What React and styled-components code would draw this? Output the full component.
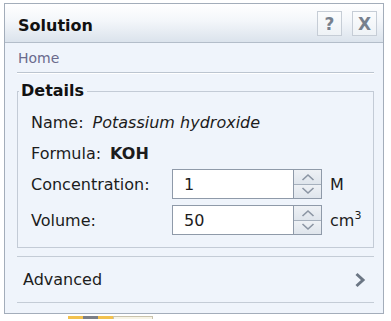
import React from 'react';
import styled, { createGlobalStyle } from 'styled-components';

const GlobalStyle = createGlobalStyle`
    body {
        margin: 0;
        background: #ffffff;
        font-family: 'DejaVu Sans', 'Noto Sans', sans-serif;
    }
`;

const Spinner = () => (
    <SpinBox>
        <SpinHalf>
            <svg width="14" height="8" viewBox="0 0 14 8">
                <path d="M1.5 7 L7 2 L12.5 7" fill="none" stroke="#8b95a3" strokeWidth="1.6" />
            </svg>
        </SpinHalf>
        <SpinHalf $bottom>
            <svg width="14" height="8" viewBox="0 0 14 8">
                <path d="M1.5 1 L7 6 L12.5 1" fill="none" stroke="#8b95a3" strokeWidth="1.6" />
            </svg>
        </SpinHalf>
    </SpinBox>
);

const App = () => {
    return (
        <Page>
            <GlobalStyle />
            <Panel>
                <Header>
                    <Title>Solution</Title>
                    <HeaderButtons>
                        <IconButton>?</IconButton>
                        <IconButton>X</IconButton>
                    </HeaderButtons>
                </Header>
                <Body>
                    <Breadcrumb>Home</Breadcrumb>
                    <Group>
                        <Legend>Details</Legend>
                        <Row>
                            <Label>Name:</Label>
                            <Italic>Potassium hydroxide</Italic>
                        </Row>
                        <Row>
                            <Label>Formula:</Label>
                            <Strong>KOH</Strong>
                        </Row>
                        <FieldRow>
                            <FieldLabel>Concentration:</FieldLabel>
                            <InputWrap>
                                <Input defaultValue="1" />
                                <Spinner />
                            </InputWrap>
                            <Unit>M</Unit>
                        </FieldRow>
                        <FieldRow>
                            <FieldLabel>Volume:</FieldLabel>
                            <InputWrap>
                                <Input defaultValue="50" />
                                <Spinner />
                            </InputWrap>
                            <Unit>cm<sup>3</sup></Unit>
                        </FieldRow>
                    </Group>
                    <Expander>
                        <span>Advanced</span>
                        <svg width="12" height="16" viewBox="0 0 12 16">
                            <path d="M2.5 2 L9 8 L2.5 14" fill="none" stroke="#6b7684" strokeWidth="3" />
                        </svg>
                    </Expander>
                </Body>
            </Panel>
            <Dock>
                <DockTab />
                <DockSlot />
            </Dock>
        </Page>
    );
}

const Page = styled.div`
    padding: 3px 0 0 4px;
    height: 318px;
    overflow: hidden;
`;

const Panel = styled.div`
    box-sizing: border-box;
    width: 380px;
    height: 311px;
    border: 1px solid #a3adba;
    background: #eff4fb;
    display: flex;
    flex-direction: column;
`;

const Header = styled.div`
    box-sizing: border-box;
    height: 39px;
    padding: 0 6px 0 13px;
    display: flex;
    align-items: center;
    justify-content: space-between;
    background: linear-gradient(#ffffff 0%, #f3f6fa 45%, #dbe3ec 100%);
    border-bottom: 1px solid #b3bdc9;
`;

const Title = styled.div`
    font-size: 16px;
    font-weight: bold;
    color: #111111;
    padding-top: 4px;
`;

const HeaderButtons = styled.div`
    display: flex;
    gap: 10px;
    padding-top: 1px;
`;

const IconButton = styled.div`
    box-sizing: border-box;
    width: 25px;
    height: 25px;
    border: 1px solid #c6cdd6;
    background: linear-gradient(#fbfcfd, #eef2f6);
    color: #76808d;
    font-size: 17px;
    font-weight: bold;
    display: flex;
    align-items: center;
    justify-content: center;
`;

const Body = styled.div`
    padding: 0 9px 0 12px;
    display: flex;
    flex-direction: column;
`;

const Breadcrumb = styled.div`
    height: 29px;
    padding-left: 1px;
    font-size: 14px;
    color: #6a6a8c;
    display: flex;
    align-items: center;
    border-bottom: 1px solid #bcc5d0;
    box-shadow: 0 1px 0 #ffffff;
`;

const Group = styled.fieldset`
    margin: 8px 0 0 0;
    padding: 6px 12px 12px 13px;
    border: 1px solid #c3cbd6;
    display: flex;
    flex-direction: column;
    gap: 1px;
`;

const Legend = styled.legend`
    padding: 0 3px 0 2px;
    margin-left: -12px;
    font-size: 16px;
    line-height: 20px;
    font-weight: bold;
    color: #111111;
`;

const Row = styled.div`
    height: 30px;
    display: flex;
    align-items: center;
    gap: 9px;
    font-size: 16px;
    color: #1c1c1c;
`;

const Label = styled.span``;

const Italic = styled.span`
    font-style: italic;
`;

const Strong = styled.span`
    font-weight: bold;
`;

const FieldRow = styled.div`
    height: 30px;
    display: flex;
    align-items: center;
    font-size: 16px;
    color: #1c1c1c;
    & + & {
        margin-top: 5px;
    }
`;

const FieldLabel = styled.span`
    width: 141px;
`;

const InputWrap = styled.div`
    display: flex;
    height: 30px;
`;

const Input = styled.input`
    box-sizing: border-box;
    width: 121px;
    height: 30px;
    margin: 0;
    padding: 0 0 0 11px;
    border: 1px solid #8f9aa9;
    border-right: none;
    background: #ffffff;
    font-family: 'DejaVu Sans', sans-serif;
    font-size: 16px;
    color: #1c1c1c;
    outline: none;
`;

const SpinBox = styled.div`
    box-sizing: border-box;
    width: 29px;
    height: 30px;
    border: 1px solid #8f9aa9;
    display: flex;
    flex-direction: column;
`;

const SpinHalf = styled.div`
    flex: 1;
    display: flex;
    align-items: center;
    justify-content: center;
    background: linear-gradient(#eef1f5, #dfe5ec);
    border-top: ${({ $bottom }) => ($bottom ? '1px solid #a6b0bd' : 'none')};
`;

const Unit = styled.span`
    margin-left: 8px;
    sup {
        font-size: 11px;
        vertical-align: 7px;
        line-height: 0;
    }
`;

const Expander = styled.div`
    margin-top: 8px;
    height: 45px;
    padding: 0 8px 0 6px;
    display: flex;
    align-items: center;
    justify-content: space-between;
    font-size: 16px;
    color: #1c1c1c;
    border-top: 1px solid #c4ccd6;
    border-bottom: 1px solid #c4ccd6;
`;

const Dock = styled.div`
    display: flex;
    margin: 2px 0 0 64px;
`;

const DockTab = styled.div`
    width: 45px;
    height: 3px;
    background: linear-gradient(90deg, #f2c14e 0 15px, #7c7f86 15px 30px, #f2c14e 30px);
`;

const DockSlot = styled.div`
    box-sizing: border-box;
    width: 40px;
    height: 3px;
    border: 1px solid #c9c3ad;
    border-bottom: none;
    background: #f7f4e6;
`;

export default App;
